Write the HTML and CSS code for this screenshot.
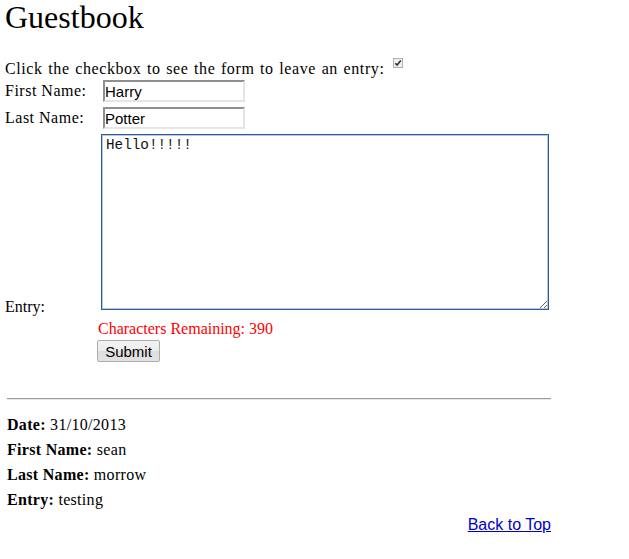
FILE: index.html
```html
<!DOCTYPE html>
<html lang="en">
<head>
<meta charset="utf-8">
<title>Guestbook</title>
<link rel="stylesheet" href="styles.css">
</head>
<body>
<div class="page">
  <h1 class="title">Guestbook</h1>
  <p class="intro">Click the checkbox to see the form to leave an entry: <span class="check" role="checkbox" aria-checked="true"><svg width="10" height="10" viewBox="0 0 10 10"><rect x="0.5" y="0.5" width="9" height="9" fill="#f0f0f0" stroke="#b0b0b0"/><path d="M2.3 5.2 L4.1 7 L7.8 2.6" fill="none" stroke="#333333" stroke-width="1.6"/></svg></span></p>
  <form class="form">
    <div class="row">
      <label class="label" for="fn">First Name:</label>
      <input class="field" id="fn" type="text" value="Harry">
    </div>
    <div class="row">
      <label class="label" for="ln">Last Name:</label>
      <input class="field" id="ln" type="text" value="Potter">
    </div>
    <div class="row row-entry">
      <label class="label label-entry" for="en">Entry:</label>
      <textarea class="area" id="en">Hello!!!!!</textarea>
    </div>
    <div class="counter">Characters Remaining: 390</div>
    <div class="actions"><button class="submit" type="button">Submit</button></div>
  </form>
  <hr class="rule">
  <div class="entries">
    <div class="line"><b>Date:</b> 31/10/2013</div>
    <div class="line"><b>First Name:</b> sean</div>
    <div class="line"><b>Last Name:</b> morrow</div>
    <div class="line"><b>Entry:</b> testing</div>
  </div>
  <div class="back"><a class="back-link" href="#">Back to Top</a></div>
</div>
</body>
</html>
```
FILE: styles.css
```css
html, body {
  margin: 0;
  padding: 0;
  background: #ffffff;
}
body {
  font-family: "Liberation Serif", "Times New Roman", serif;
  font-size: 16px;
  color: #000000;
}
.page {
  width: 546px;
  padding: 1px 0 0 5px;
}
.title {
  margin: 0;
  font-size: 32px;
  line-height: 32px;
  font-weight: normal;
}
.intro {
  margin: 25px 0 0 0;
  line-height: 18px;
  letter-spacing: 0.6px;
  word-spacing: 1px;
}
.check {
  display: inline-block;
  width: 10px;
  height: 10px;
  margin-left: 3px;
  vertical-align: 6px;
}
.check svg {
  display: block;
}
.form {
  margin: 0;
}
.row {
  display: flex;
  align-items: center;
  margin-top: 5px;
}
.row:first-child {
  margin-top: 2px;
}
.label {
  width: 98px;
  flex: none;
  line-height: 18px;
  letter-spacing: 0.5px;
}
.field {
  box-sizing: border-box;
  width: 142px;
  height: 22px;
  margin: 0;
  padding: 0;
  border: 2px solid;
  border-color: #8f8f8f #e4e4e4 #e4e4e4 #8f8f8f;
  font-family: "Liberation Sans", Arial, sans-serif;
  font-size: 15px;
  color: #000;
  outline: none;
  background: #fff;
}
.row-entry {
  align-items: flex-end;
}
.label-entry {
  margin-bottom: -6px;
  letter-spacing: 0;
}
.area {
  box-sizing: border-box;
  width: 448px;
  height: 176px;
  margin: 0 0 0 -2px;
  padding: 2px 4px;
  border: 1px solid #33599a;
  box-shadow: inset 0 0 0 1px #b4c8e2;
  font-family: "Liberation Mono", "Courier New", monospace;
  font-size: 14.3px;
  line-height: 16px;
  color: #111;
  outline: none;
  resize: both;
}
.counter {
  margin: 10px 0 0 93px;
  line-height: 18px;
  color: #ff0000;
}
.actions {
  margin: 2px 0 0 92px;
}
.submit {
  box-sizing: border-box;
  width: 63px;
  height: 22px;
  margin: 0;
  padding: 0;
  border: 1px solid #acacac;
  border-radius: 2px;
  background: linear-gradient(#f3f3f3 0%, #ececec 50%, #dedede 51%, #e2e2e2 100%);
  font-family: "Liberation Sans", Arial, sans-serif;
  font-size: 15px;
  color: #000;
}
.rule {
  margin: 36px 0 0 2px;
  height: 0;
  border: 0;
  border-top: 1px solid #9c9c9c;
  border-bottom: 1px solid #e8e8e8;
}
.entries {
  margin-top: 12px;
  padding-left: 2px;
  letter-spacing: 0.3px;
}
.line {
  line-height: 25px;
}
.back {
  margin-top: 4px;
  text-align: right;
  line-height: 18px;
}
.back-link {
  font-family: "Liberation Sans", Arial, sans-serif;
  font-size: 16px;
  color: #0000cc;
}
```
